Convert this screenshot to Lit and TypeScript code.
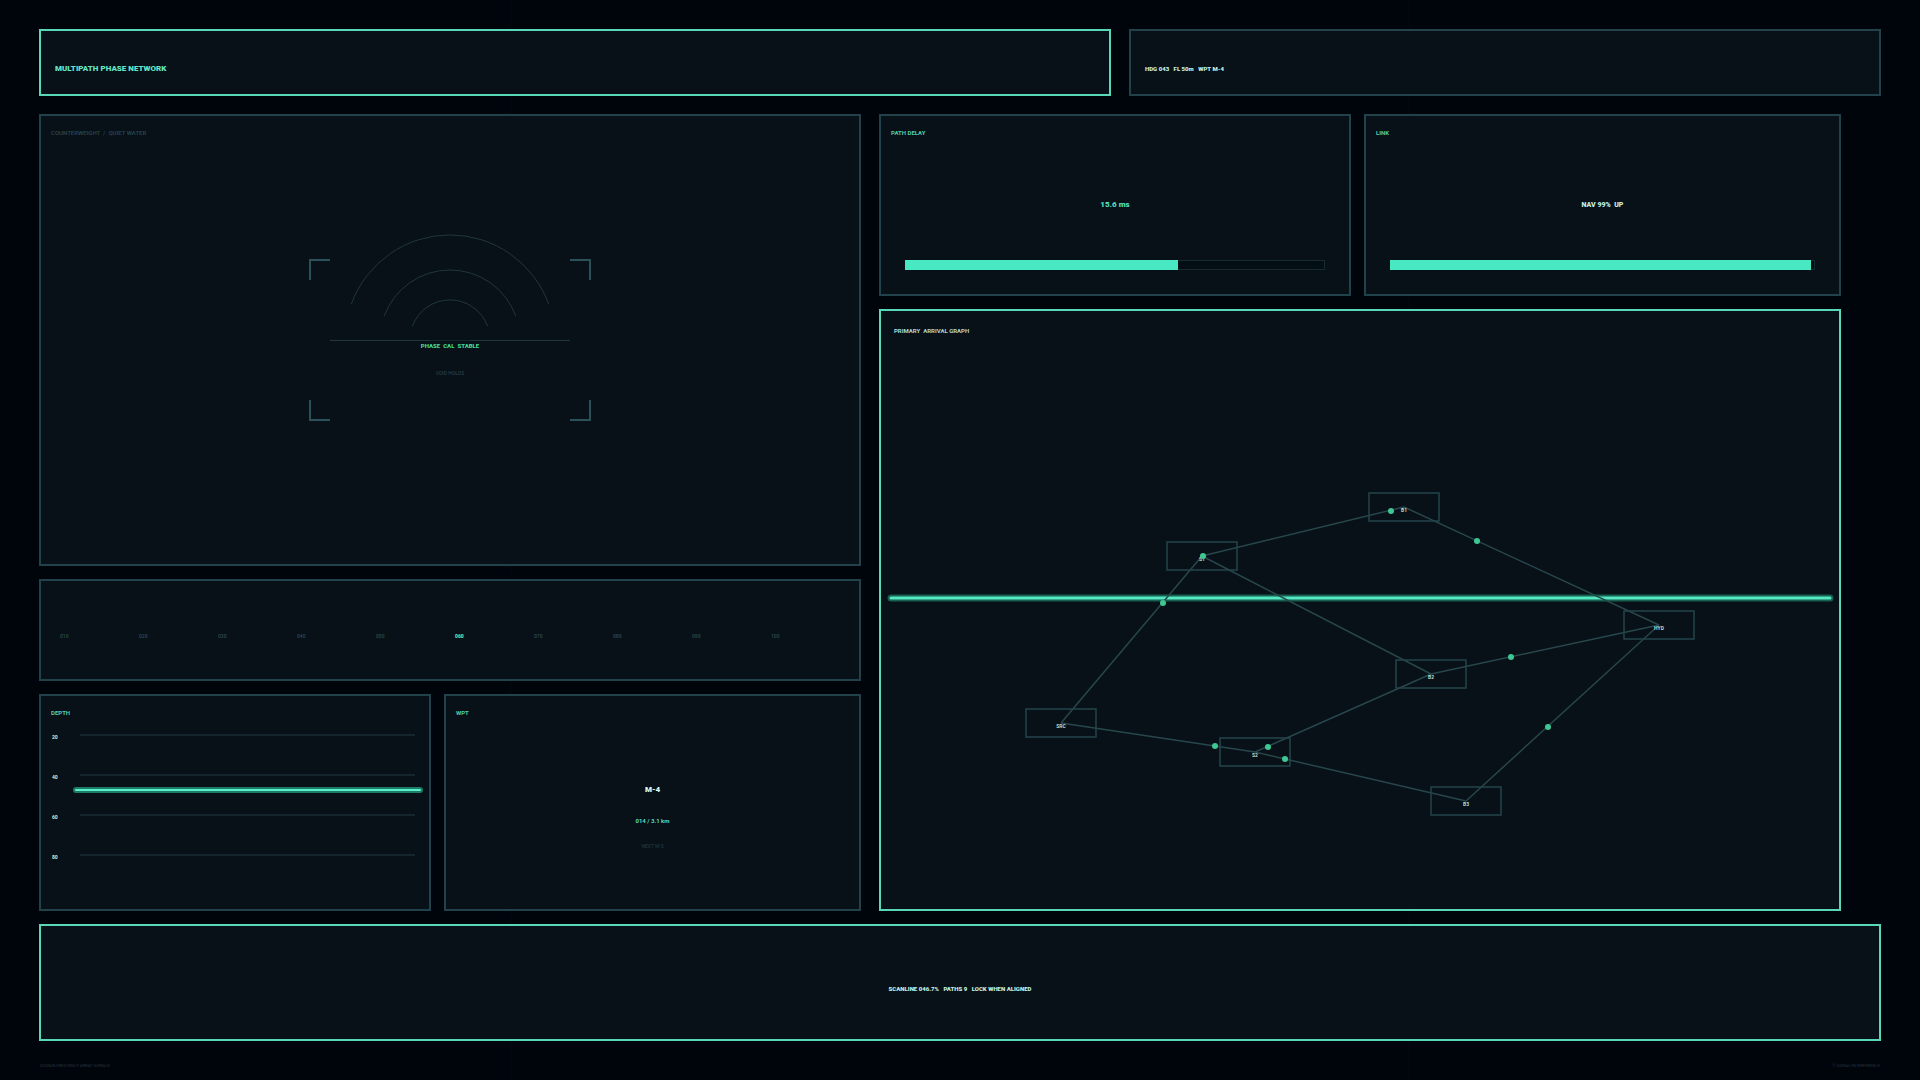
import { LitElement, html, svg, css } from "lit";
import { customElement } from "lit/decorators.js";
import { classMap } from "lit/directives/class-map.js";

interface GraphNode {
  id: string;
  x: number;
  y: number;
}

const NODES: GraphNode[] = [
  { id: "SRC", x: 180, y: 412 },
  { id: "S1", x: 321, y: 245 },
  { id: "B1", x: 523, y: 196 },
  { id: "B2", x: 550, y: 363 },
  { id: "S2", x: 374, y: 441 },
  { id: "B3", x: 585, y: 490 },
  { id: "HYD", x: 778, y: 314 },
];

const EDGES: [string, string][] = [
  ["SRC", "S1"],
  ["SRC", "S2"],
  ["S1", "B1"],
  ["S1", "B2"],
  ["S2", "B2"],
  ["S2", "B3"],
  ["B1", "HYD"],
  ["B2", "HYD"],
  ["B3", "HYD"],
];

const PULSES: [number, number][] = [
  [282, 292],
  [322, 245],
  [510, 200],
  [596, 230],
  [334, 435],
  [387, 436],
  [404, 448],
  [630, 346],
  [667, 416],
];

const HEADINGS = ["010", "020", "030", "040", "050", "060", "070", "080", "090", "100"];
const CURRENT_HEADING = "060";
const DEPTHS = [20, 40, 60, 80];

@customElement("app-root")
export class AppRoot extends LitElement {
  static styles = css`
    :host {
      --line: #21424a;
      --live: #58d8b8;
      --mint: #48e8c2;
      --pale: #c4efe2;
      --mute: #2a4953;
      display: block;
      font-family: Roboto, "Liberation Sans", sans-serif;
      font-size: 6px;
      line-height: 8px;
      font-weight: 700;
      color: var(--pale);
      background: #00050c;
    }
    * {
      box-sizing: border-box;
    }
    h1, h2, p, ul, ol {
      margin: 0;
      padding: 0;
      font: inherit;
      list-style: none;
    }
    .page {
      min-height: 100vh;
      padding: 29px 39px 10px;
      display: grid;
      grid-template-rows: 85fr 797fr 130fr 29px;
      background:
        linear-gradient(90deg, transparent 510px, #020a11 510px, #020a11 511px, transparent 511px),
        linear-gradient(90deg, transparent 1409px, #020a11 1409px, #020a11 1410px, transparent 1410px);
    }
    .panel {
      border: 2px solid var(--line);
      background: #081018;
      min-width: 0;
      min-height: 0;
    }
    .live {
      border-color: var(--live);
    }
    .header {
      display: grid;
      grid-template-columns: 1072fr 752fr;
      gap: 18px;
      margin-bottom: 18px;
    }
    .strip {
      display: flex;
      align-items: center;
      padding: 12px 14px 0;
      font-weight: 900;
      white-space: pre;
    }
    .title {
      font-size: 8px;
      color: #62e6c6;
    }
    .main {
      display: grid;
      grid-template-columns: 822fr 962fr;
      gap: 18px;
      margin-right: 40px;
    }
    .column {
      display: grid;
      gap: 13px;
      min-width: 0;
    }
    .left {
      grid-template-rows: 452fr 102fr 217fr;
    }
    .right {
      grid-template-rows: 182fr 602fr;
    }
    .pair {
      display: grid;
      gap: 13px;
    }
    .instruments {
      grid-template-columns: 392fr 417fr;
    }
    .readouts {
      grid-template-columns: 472fr 477fr;
    }
    .card {
      display: flex;
      flex-direction: column;
      padding: 13px 10px;
    }
    .label {
      color: #4fceb0;
      white-space: pre;
    }
    .quiet {
      color: var(--mute);
      font-weight: 500;
    }
    .canvas {
      display: grid;
    }
    .canvas > * {
      grid-area: 1 / 1;
    }
    .inset {
      padding: 13px 10px;
    }
    .deep {
      padding: 16px 13px;
      color: #b2d8cf;
    }
    .radar {
      width: 290px;
      height: 220px;
      place-self: center;
    }
    .graph {
      width: 100%;
      height: 100%;
    }
    svg text {
      text-anchor: middle;
      white-space: pre;
    }
    .bracket {
      fill: none;
      stroke: #2b5058;
      stroke-width: 2;
    }
    .arc {
      fill: none;
      stroke: #21363d;
    }
    .faded {
      stroke: #15262d;
    }
    .status {
      fill: #42d994;
      font-weight: 900;
    }
    .hold {
      fill: #304a52;
      font-size: 5px;
      font-weight: 400;
    }
    .compass {
      display: grid;
      grid-template-columns: repeat(10, 1fr);
      align-items: center;
      padding: 12px 9px 0 19px;
      font-size: 5px;
      font-weight: 500;
      color: #2d4d57;
    }
    .current {
      font-weight: 900;
      color: var(--mint);
    }
    .scale {
      position: relative;
      flex: 1;
      display: grid;
      grid-template-rows: repeat(4, 1fr);
      margin: 17px 0 2px;
      padding: 0 4px 0 1px;
      font-size: 5px;
      line-height: 6px;
    }
    .tick {
      display: grid;
      grid-template-columns: 28px 1fr;
      align-items: start;
    }
    .tick::after {
      content: "";
      border-top: 2px solid #14252d;
    }
    .marker {
      position: absolute;
      top: 35%;
      left: 22px;
      right: -4px;
      height: 6px;
      margin-top: -3px;
      border: 2px solid #1c7a66;
      border-radius: 3px;
      background: #5bf0cc;
    }
    .waypoint {
      flex: 1;
      display: flex;
      flex-direction: column;
      align-items: center;
      justify-content: center;
      gap: 17px;
      padding-top: 22px;
      text-align: center;
    }
    .name {
      margin-bottom: 5px;
      font-size: 8px;
      line-height: 10px;
      font-weight: 900;
      color: #def8f0;
    }
    .range {
      color: #56dcbc;
    }
    .next {
      font-size: 5px;
      font-weight: 400;
      color: #263e48;
    }
    .value {
      flex: 1;
      display: flex;
      align-items: center;
      justify-content: center;
      padding-top: 12px;
      font-size: 8px;
      font-weight: 900;
      white-space: pre;
      color: #50dcba;
    }
    .state {
      font-size: 7px;
      color: var(--pale);
    }
    .bar {
      height: 10px;
      margin: 0 14px 11px;
      background: #040e15;
      box-shadow: inset 0 0 0 1px #182a31;
    }
    .fill {
      height: 10px;
      background: var(--mint);
    }
    .edge {
      stroke: #27474c;
      stroke-width: 1.5;
    }
    .node {
      fill: none;
      stroke: #23444a;
      stroke-width: 1.5;
    }
    .pulse {
      fill: #3fc793;
    }
    .tag {
      fill: #b5ddd3;
      font-size: 5px;
    }
    .halo {
      stroke: #17604f;
      stroke-width: 7;
      stroke-linecap: round;
    }
    .beam {
      stroke: #55e6c2;
      stroke-width: 3;
      stroke-linecap: round;
    }
    .summary {
      margin-top: 13px;
      justify-content: center;
    }
    .footer {
      display: flex;
      justify-content: space-between;
      padding: 23px 1px 0;
      font-size: 4px;
      line-height: 4px;
      font-weight: 400;
      color: #26313a;
    }
  `;

  private renderRadar() {
    return html`
      <svg class="radar" viewBox="-145 -110 290 220" role="img" aria-label="Phase calibration">
        <path class="bracket" d="M-140 -60V-80H-120M120 -80H140V-60M140 60V80H120M-120 80H-140V60" />
        <path class="arc" d="M-98.7 -35.9A105 105 0 0 1 98.7 -35.9" />
        <path class="arc" d="M-65.8 -23.9A70 70 0 0 1 65.8 -23.9" />
        <path class="arc" d="M-37.6 -13.7A40 40 0 0 1 37.6 -13.7" />
        <path class="arc" d="M-120 0.5H-20M20 0.5H120" />
        <path class="faded" d="M-20 0.5H20" />
        <text class="status" x="0" y="8">PHASE  CAL  STABLE</text>
        <text class="hold" x="0" y="35">VOID HOLDS</text>
      </svg>
    `;
  }

  private renderGraph() {
    const at = (id: string) => NODES.find((n) => n.id === id)!;
    return html`
      <svg class="graph" viewBox="0 0 958 598" role="img" aria-label="Primary arrival graph">
        <line class="halo" x1="10" y1="287" x2="949" y2="287" />
        <line class="beam" x1="10" y1="287" x2="949" y2="287" />
        ${EDGES.map(([a, b]) => {
          const p = at(a);
          const q = at(b);
          return svg`<line class="edge" x1=${p.x} y1=${p.y} x2=${q.x} y2=${q.y} />`;
        })}
        ${NODES.map(
          (n) => svg`
            <rect class="node" x=${n.x - 35} y=${n.y - 14} width="70" height="28" />
            <text class="tag" x=${n.x} y=${n.y + 5}>${n.id}</text>`
        )}
        ${PULSES.map(([x, y]) => svg`<circle class="pulse" cx=${x} cy=${y} r="3" />`)}
      </svg>
    `;
  }

  private renderBar(percent: number, label: string) {
    return html`
      <div class="bar" role="progressbar" aria-label=${label} aria-valuenow=${percent}>
        <div class="fill" style="width: ${percent}%"></div>
      </div>
    `;
  }

  render() {
    return html`
      <div class="page">
        <header class="header">
          <div class="panel live strip"><h1 class="title">MULTIPATH PHASE NETWORK</h1></div>
          <div class="panel strip"><p>HDG 043   FL 50m   WPT M-4</p></div>
        </header>

        <main class="main">
          <div class="column left">
            <section class="panel canvas">
              <h2 class="label quiet inset">COUNTERWEIGHT  /  QUIET WATER</h2>
              ${this.renderRadar()}
            </section>
            <ol class="panel compass">
              ${HEADINGS.map(
                (h) => html`<li class=${classMap({ current: h === CURRENT_HEADING })}>${h}</li>`
              )}
            </ol>
            <div class="pair instruments">
              <section class="panel card">
                <h2 class="label">DEPTH</h2>
                <ul class="scale">
                  ${DEPTHS.map((d) => html`<li class="tick">${d}</li>`)}
                  <li class="marker" aria-hidden="true"></li>
                </ul>
              </section>
              <section class="panel card">
                <h2 class="label">WPT</h2>
                <div class="waypoint">
                  <p class="name">M-4</p>
                  <p class="range">014 / 3.1 km</p>
                  <p class="next">NEXT M-5</p>
                </div>
              </section>
            </div>
          </div>

          <div class="column right">
            <div class="pair readouts">
              <section class="panel card">
                <h2 class="label">PATH DELAY</h2>
                <p class="value">15.6 ms</p>
                ${this.renderBar(65, "Path delay")}
              </section>
              <section class="panel card">
                <h2 class="label">LINK</h2>
                <p class="value state">NAV 99%  UP</p>
                ${this.renderBar(99, "Link")}
              </section>
            </div>
            <section class="panel live canvas">
              <h2 class="label deep">PRIMARY  ARRIVAL GRAPH</h2>
              ${this.renderGraph()}
            </section>
          </div>
        </main>

        <section class="panel live strip summary">
          <p>SCANLINE 046.7%   PATHS 9   LOCK WHEN ALIGNED</p>
        </section>

        <footer class="footer">
          <span>DOMAIN FREQUENCY ARRAY SURFACE</span>
          <span>© SIGNAL/INTERFERENCE</span>
        </footer>
      </div>
    `;
  }
}
